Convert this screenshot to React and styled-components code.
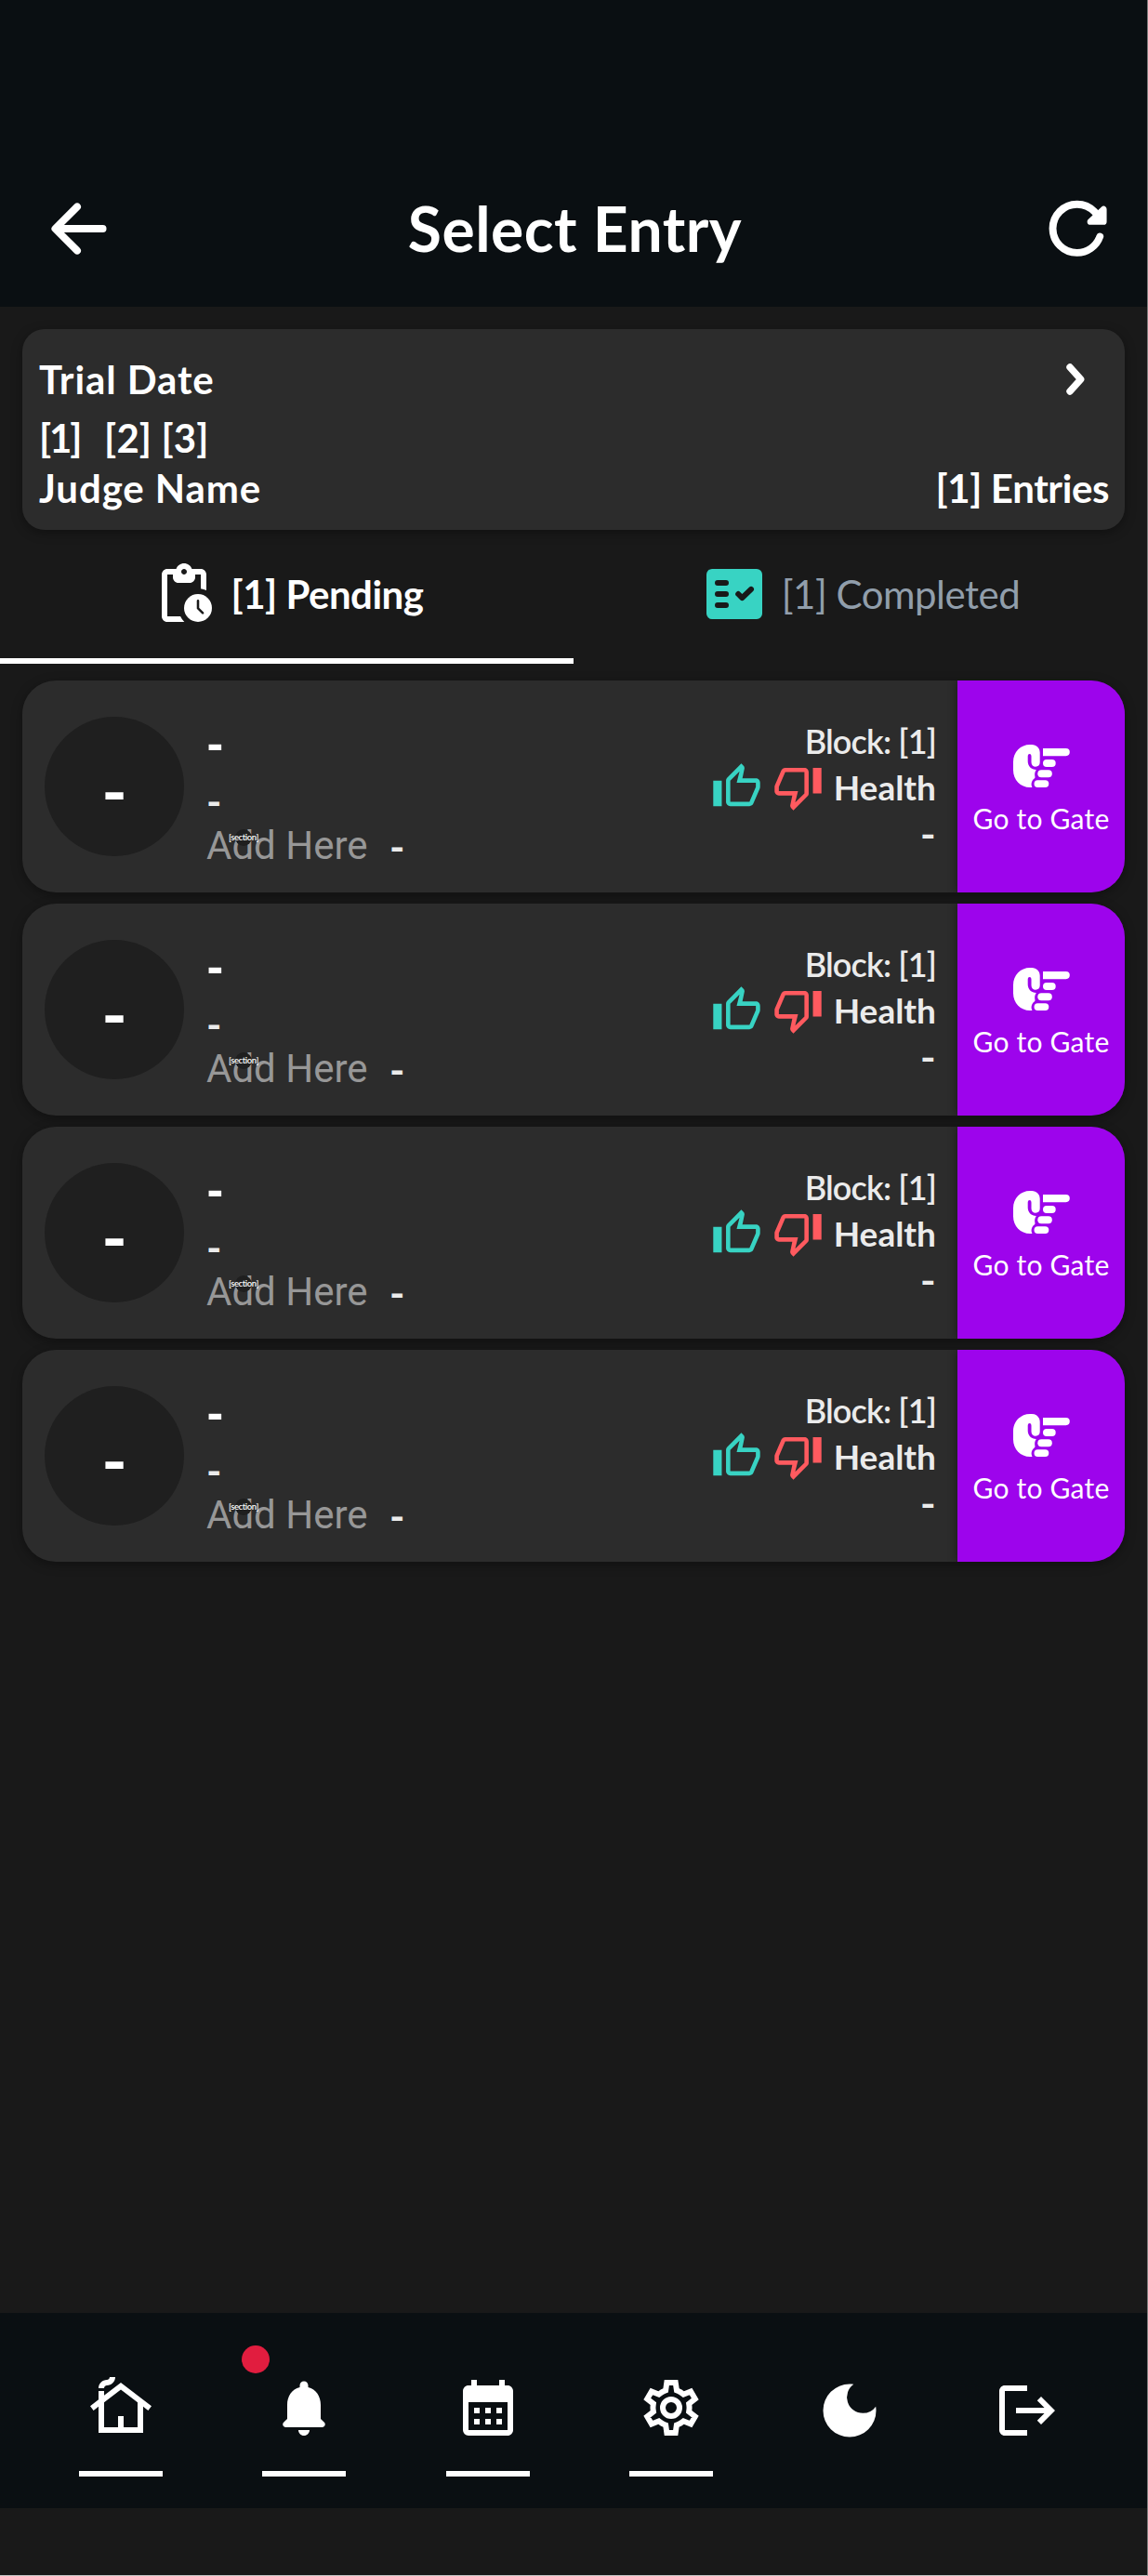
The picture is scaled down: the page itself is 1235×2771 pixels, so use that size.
import React from "react";
import styled, { createGlobalStyle } from "styled-components";
import { MdOutlineCottage, MdCalendarMonth, MdDarkMode } from "react-icons/md";
import { IoArrowBack } from "react-icons/io5";

const GlobalStyle = createGlobalStyle`
  * { box-sizing: border-box; }
  body { margin: 0; background: #191919; }
  svg { display: block; flex: none; }
`;

const Screen = styled.div`
  width: 1235px;
  height: 2771px;
  display: flex;
  flex-direction: column;
  background: #191919;
  border-right: 1px solid #7d7d7d;
  border-bottom: 1px solid #c4c4c4;
  font-family: Lato, sans-serif;
  color: #fff;
  overflow: hidden;
`;

const Text = styled.span`
  font-size: ${(p) => p.$size || 42}px;
  font-weight: ${(p) => p.$weight || 600};
  letter-spacing: ${(p) => p.$spacing || 0}px;
  line-height: ${(p) => p.$line || 54}px;
  padding-top: ${(p) => p.$drop || 0}px;
  color: ${(p) => p.$color || "#fff"};
  white-space: pre;
`;

const Header = styled.header`
  height: 330px;
  flex: none;
  padding: 162px 38px 0 43px;
  background: #0a0f12;
  display: grid;
  grid-template-columns: 84px 1fr 86px;
  align-items: center;
  justify-items: center;
  & > :last-child { justify-self: end; }
`;

const TrialCard = styled.section`
  margin: 24px 24px 0;
  height: 216px;
  flex: none;
  padding: 27px 17px 0 18px;
  border-radius: 24px;
  background: #2c2c2c;
  box-shadow: 0 3px 12px rgba(0, 0, 0, 0.35);
`;

const TrialRow = styled.div`
  height: 54px;
  display: flex;
  align-items: center;
  justify-content: ${(p) => (p.$start ? "flex-start" : "space-between")};
  gap: ${(p) => p.$gap || 0}px;
  margin-bottom: ${(p) => p.$after || 0}px;
  padding-right: ${(p) => p.$right || 0}px;
`;

const Tabs = styled.div`
  display: grid;
  grid-template-columns: 1fr 1fr;
  flex: none;
`;

const Tab = styled.div`
  height: 144px;
  display: flex;
  align-items: center;
  justify-content: center;
  gap: 15px;
  border-bottom: 6px solid ${(p) => (p.$active ? "#fff" : "transparent")};
`;

const EntryList = styled.main`
  flex: 1;
  padding: 18px 24px 0;
  display: flex;
  flex-direction: column;
  gap: 12px;
`;

const EntryCard = styled.article`
  height: 228px;
  flex: none;
  display: flex;
  align-items: center;
  padding-left: 24px;
  border-radius: 36px;
  overflow: hidden;
  background: #2c2c2c;
  box-shadow: 0 3px 12px rgba(0, 0, 0, 0.35);
`;

const Armband = styled.div`
  width: 150px;
  height: 150px;
  padding-top: 10px;
  border-radius: 50%;
  background: #1f1f1f;
  display: flex;
  align-items: center;
  justify-content: center;
`;

const EntryInfo = styled.div`
  flex: 1;
  align-self: stretch;
  padding: 38px 0 0 24px;
  display: flex;
  flex-direction: column;
`;

const NoteRow = styled.div`
  display: flex;
  align-items: center;
  height: 40px;
`;

const Note = styled.div`
  position: relative;
  width: 197px;
  height: 40px;
  font: 400 42px/40px Roboto, sans-serif;
  color: #979797;
  white-space: pre;
`;

const SectionBadge = styled.span`
  position: absolute;
  left: 31px;
  top: 2px;
  width: 18px;
  height: 18px;
  border-radius: 50%;
  background: #1f1f1f;
  font-family: Lato, sans-serif;
  display: flex;
  align-items: center;
  justify-content: center;
`;

const EntryStatus = styled.div`
  display: flex;
  flex-direction: column;
  align-items: flex-end;
  padding: 1px 23px 0 0;
`;

const StatusRow = styled.div`
  height: 50px;
  display: flex;
  align-items: center;
  gap: 11px;
`;

const GateButton = styled.div`
  width: 180px;
  align-self: stretch;
  padding-top: 6px;
  background: #9d04ec;
  display: flex;
  flex-direction: column;
  align-items: center;
  justify-content: center;
  gap: 15px;
  box-shadow: -2px 0 8px rgba(0, 0, 0, 0.3);
`;

const NavBar = styled.nav`
  height: 210px;
  flex: none;
  margin-bottom: 72px;
  padding: 66px 0 0 84px;
  background: #0a0f12;
  display: flex;
  gap: 106.5px;
`;

const NavItem = styled.div`
  position: relative;
  width: ${(p) => p.$width || 91}px;
  padding-top: ${(p) => p.$top || 0}px;
  display: flex;
  flex-direction: column;
  align-items: center;
`;

const NavLine = styled.div`
  width: 90px;
  height: 6px;
  margin-top: 32px;
  background: #fff;
`;

const AlertDot = styled.div`
  position: absolute;
  left: -22px;
  top: -31px;
  width: 30px;
  height: 30px;
  border-radius: 50%;
  background: #e11d3f;
`;

const ReloadIcon = () => (
  <svg width="69.6" height="69.6" viewBox="0 0 512 512" strokeLinecap="round" strokeLinejoin="round">
    <path d="M400 148l-21.12-24.57A191.43 191.43 0 00240 64C134 64 48 150 48 256s86 192 192 192a192.09 192.09 0 00181.07-128" fill="none" stroke="#fff" strokeWidth="58" />
    <path d="M450 104V202H346Z" fill="#fff" stroke="#fff" strokeWidth="50" />
  </svg>
);

const ChevronIcon = () => (
  <svg width="20" height="34" viewBox="0 0 20 34">
    <path d="M4 4L15.7 17L4 30" fill="none" stroke="#fff" strokeWidth="7.4" strokeLinecap="round" strokeLinejoin="round" />
  </svg>
);

const PendingIcon = () => (
  <svg width="72" height="72" viewBox="0 0 24 24" fill="#fff">
    <path d="M18 3h-3.18C14.4 1.84 13.3 1 12 1s-2.4.84-2.82 2H6c-1.1 0-2 .9-2 2v15c0 1.1.9 2 2 2h6.11a6.7 6.7 0 01-1.42-2H6V5h2v1c0 1.1.9 2 2 2h4c1.1 0 2-.9 2-2V5h2v5.08c.71.1 1.38.31 2 .6V5c0-1.1-.9-2-2-2zm-6 2c-.55 0-1-.45-1-1s.45-1 1-1 1 .45 1 1-.45 1-1 1z" />
    <circle cx="17" cy="17" r="5" />
    <path d="M17 14.4v2.7l1.7 1.7" fill="none" stroke="#191919" strokeWidth=".85" strokeLinecap="round" />
  </svg>
);

const CompletedIcon = () => (
  <svg width="72" height="72" viewBox="0 0 24 24">
    <rect x="2" y="3" width="20" height="18" rx="2" fill="#38d3c3" />
    <g fill="none" stroke="#191919" strokeWidth="2" strokeLinecap="round" strokeLinejoin="round">
      <path d="M6 8h3M6 12h3M6 16h3" />
      <path d="M13.4 12l1.4 1.4 3.2-3.1" />
    </g>
  </svg>
);

const ThumbUpIcon = () => (
  <svg width="55" height="55" viewBox="0 0 24 24" fill="#38d3c3">
    <path d="M9 21h9c.83 0 1.54-.5 1.84-1.22l3.02-7.05c.09-.23.14-.47.14-.73v-2c0-1.1-.9-2-2-2h-6.31l.95-4.57.03-.32c0-.41-.17-.79-.44-1.06L14.17 1 7.58 7.59C7.22 7.95 7 8.45 7 9v10c0 1.1.9 2 2 2zM9 9l4.34-4.34L12 10h9v2l-3 7H9V9zM1 9h4v12H1z" />
  </svg>
);

const ThumbDownIcon = () => (
  <svg width="55" height="55" viewBox="0 0 24 24" fill="#ff5a5f">
    <path d="M15 3H6c-.83 0-1.54.5-1.84 1.22l-3.02 7.05c-.09.23-.14.47-.14.73v2c0 1.1.9 2 2 2h6.31l-.95 4.57-.03.32c0 .41.17.79.44 1.06L9.83 23l6.59-6.59c.36-.36.58-.86.58-1.41V5c0-1.1-.9-2-2-2zm0 12l-4.34 4.34L12 14H3v-2l3-7h9v10zm4-12h4v12h-4z" />
  </svg>
);

const PointingHandIcon = () => (
  <svg width="61" height="46" viewBox="0 0 61 46" fill="#fff">
    <path d="M32 4H56.7a4.1 4.1 0 010 8.2H32z" />
    <rect x="32" y="16" width="13.7" height="8" rx="4" />
    <rect x="26.3" y="27.3" width="15.5" height="8" rx="4" />
    <rect x="22.5" y="38.2" width="15.8" height="7.8" rx="3.9" />
    <path d="M20 0H18C8 0 0 8 0 18.5V27.5C0 38 8 46 18 46H20.5C19 43.5 19.2 39.5 22.3 36.8C23.4 35.9 23.6 35.5 23.4 34.5C22.8 31.5 23.2 29.2 24.8 27C19.5 27 15.7 23 15.7 18V12.5C15.7 9.2 19.5 9.2 19.5 12.5V19C19.5 22 21.5 23.7 24.1 23.7C26.8 23.7 28.7 21.8 28.7 19V8.5C28.7 3.6 25 0 20 0Z" />
  </svg>
);

const BellIcon = () => (
  <svg width="72" height="72" viewBox="0 0 24 24" fill="#fff">
    <path d="M12 22c1.1 0 2-.9 2-2h-4c0 1.1.89 2 2 2zm6-6v-5c0-3.07-1.64-5.64-4.5-6.32V4c0-.83-.67-1.5-1.5-1.5s-1.5.67-1.5 1.5v.68C7.63 5.36 6 7.92 6 11v5l-1.29 1.29c-.63.63-.19 1.71.7 1.71h13.17c.89 0 1.34-1.08.71-1.71L18 16z" />
  </svg>
);

const gear =
  "M19.44 12.99c.04-.32.08-.65.08-.99 0-.33-.03-.66-.07-.97l2.45-1.92-2.43-4.22-2.87 1.16c-.52-.4-1.08-.74-1.7-.99L14.44 2H9.57l-.44 3.06c-.61.26-1.18.6-1.7 1L4.55 4.89 2.11 9.11l2.45 1.9c-.04.33-.07.66-.07.99 0 .34.03.67.08.99l-2.45 1.9 2.43 4.2 2.88-1.15c.52.4 1.09.75 1.71 1L9.58 22h4.85l.44-3.06c.61-.26 1.2-.6 1.72-1l2.88 1.15 2.43-4.2z";

const GearIcon = () => (
  <svg width="72" height="72" viewBox="0 0 24 24" fill="none" stroke="#fff">
    <clipPath id="gear-shape"><path d={gear} /></clipPath>
    <path d={gear} strokeWidth="4" clipPath="url(#gear-shape)" />
    <circle cx="12" cy="12" r="3" strokeWidth="2" />
  </svg>
);

const LogoutIcon = () => (
  <svg width="72" height="72" viewBox="0 0 24 24" fill="#fff">
    <path d="M17 7l-1.41 1.41L18.17 11H8v2h10.17l-2.58 2.58L17 17l5-5zM4 5h8V3H4c-1.1 0-2 .9-2 2v14c0 1.1.9 2 2 2h8v-2H4V5z" />
  </svg>
);

const soft = "#ebebeb";

function Entry() {
  return (
    <EntryCard>
      <Armband><Text $size={74} $weight={700}>-</Text></Armband>
      <EntryInfo>
        <Text $size={50} $weight={800} $line={60}>-</Text>
        <Text $size={44} $weight={700} $line={57} $drop={3} $color={soft}>-</Text>
        <NoteRow>
          <Note>
            Add Here
            <SectionBadge><Text $size={9.5} $weight={600} $spacing={-0.4} $line={10}>[section]</Text></SectionBadge>
          </Note>
          <Text $size={44} $weight={700} $line={40} $color={soft}>-</Text>
        </NoteRow>
      </EntryInfo>
      <EntryStatus>
        <StatusRow><Text $size={36} $weight={600} $spacing={-0.85} $color={soft}>Block: [1]</Text></StatusRow>
        <StatusRow>
          <ThumbUpIcon />
          <ThumbDownIcon />
          <Text $size={37} $weight={700} $color={soft}>Health</Text>
        </StatusRow>
        <StatusRow><Text $size={46} $weight={600} $color={soft}>-</Text></StatusRow>
      </EntryStatus>
      <GateButton>
        <PointingHandIcon />
        <Text $size={30} $weight={400} $spacing={0.2} $line={36}>Go to Gate</Text>
      </GateButton>
    </EntryCard>
  );
}

export default function App() {
  return (
    <Screen>
      <GlobalStyle />
      <Header>
        <IoArrowBack size={84} />
        <Text $size={66} $spacing={0.5} $line={80} $weight={700}>Select Entry</Text>
        <ReloadIcon />
      </Header>
      <TrialCard>
        <TrialRow $after={9} $right={26}>
          <Text $spacing={0.9} $weight={700}>Trial Date</Text>
          <ChevronIcon />
        </TrialRow>
        <TrialRow $start $gap={26}>
          <Text $spacing={-2.2} $weight={700}>[1]</Text>
          <Text $spacing={0.1} $weight={700}>[2] [3]</Text>
        </TrialRow>
        <TrialRow>
          <Text $spacing={0.9} $weight={700}>Judge Name</Text>
          <Text $spacing={-0.4} $weight={700}>[1] Entries</Text>
        </TrialRow>
      </TrialCard>
      <Tabs>
        <Tab $active>
          <PendingIcon />
          <Text $spacing={-0.5} $weight={700}>[1] Pending</Text>
        </Tab>
        <Tab>
          <CompletedIcon />
          <Text $spacing={-0.5} $weight={400} $color="#919eab">[1] Completed</Text>
        </Tab>
      </Tabs>
      <EntryList>
        {[1, 2, 3, 4].map((n) => <Entry key={n} />)}
      </EntryList>
      <NavBar>
        <NavItem><MdOutlineCottage size={72} /><NavLine /></NavItem>
        <NavItem><AlertDot /><BellIcon /><NavLine /></NavItem>
        <NavItem><MdCalendarMonth size={72} /><NavLine /></NavItem>
        <NavItem><GearIcon /><NavLine /></NavItem>
        <NavItem $width={80} $top={1}><MdDarkMode size={76} /></NavItem>
        <NavItem $width={89} $top={3}><LogoutIcon /></NavItem>
      </NavBar>
    </Screen>
  );
}
